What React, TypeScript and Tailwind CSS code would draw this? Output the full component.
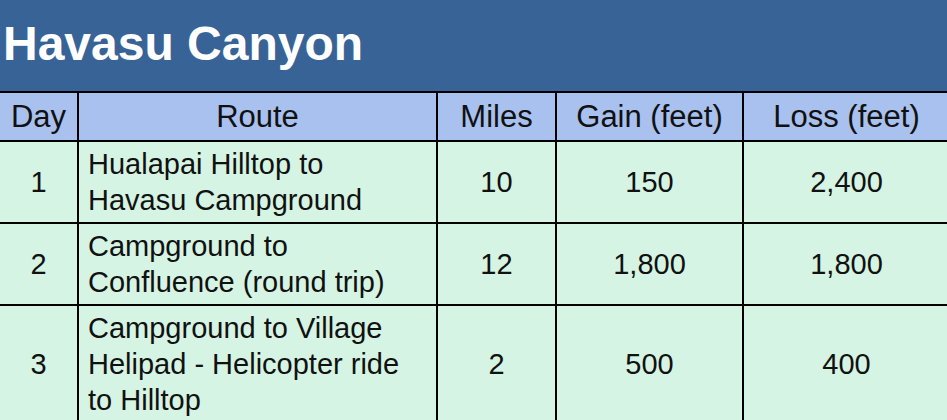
const rows = [
  { day: "1", route: ["Hualapai Hilltop to", "Havasu Campground"], miles: "10", gain: "150", loss: "2,400" },
  { day: "2", route: ["Campground to", "Confluence (round trip)"], miles: "12", gain: "1,800", loss: "1,800" },
  {
    day: "3",
    route: ["Campground to Village", "Helipad - Helicopter ride", "to Hilltop"],
    miles: "2",
    gain: "500",
    loss: "400",
  },
];

export default function App() {
  return (
    <div className="w-[947px] h-[420px] overflow-hidden bg-white font-['Liberation_Sans',Arial,sans-serif] text-[#111]">
      <div className="h-[91px] bg-[#386397] flex items-center pl-[3px] pb-[4px]">
        <h1 className="font-bold text-[48px] leading-none text-white">Havasu Canyon</h1>
      </div>
      <table className="border-collapse table-fixed w-[950px] text-[29px] leading-[36px]">
        <colgroup>
          <col className="w-[78px]" />
          <col className="w-[359px]" />
          <col className="w-[119px]" />
          <col className="w-[187px]" />
          <col className="w-[207px]" />
        </colgroup>
        <thead>
          <tr className="bg-[#a9c1ef] h-[49px] text-[31px]">
            <th className="border-2 border-black border-l-0 font-normal">Day</th>
            <th className="border-2 border-black font-normal">Route</th>
            <th className="border-2 border-black font-normal">Miles</th>
            <th className="border-2 border-black font-normal">Gain (feet)</th>
            <th className="border-2 border-black font-normal">Loss (feet)</th>
          </tr>
        </thead>
        <tbody>
          {rows.map(r => (
            <tr key={r.day} className="bg-[#d6f4e3]">
              <td className="border-2 border-black border-l-0 text-center py-1">{r.day}</td>
              <td className="border-2 border-black px-[9px] py-1 text-left">
                {r.route.map(line => (
                  <div key={line}>{line}</div>
                ))}
              </td>
              <td className="border-2 border-black text-center py-1">{r.miles}</td>
              <td className="border-2 border-black text-center py-1">{r.gain}</td>
              <td className="border-2 border-black text-center py-1">{r.loss}</td>
            </tr>
          ))}
        </tbody>
      </table>
    </div>
  );
}
